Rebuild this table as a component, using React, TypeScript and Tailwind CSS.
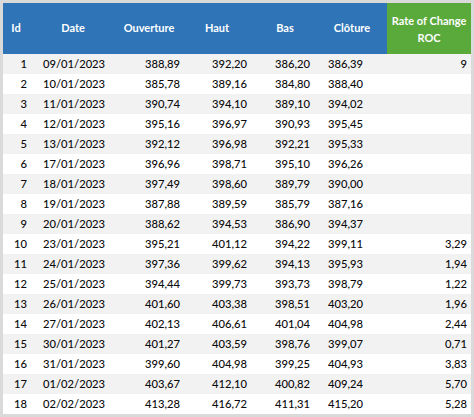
const rows: string[][] = [
  ['1', '09/01/2023', '388,89', '392,20', '386,20', '386,39', '9'],
  ['2', '10/01/2023', '385,78', '389,16', '384,80', '388,40', ''],
  ['3', '11/01/2023', '390,74', '394,10', '389,10', '394,02', ''],
  ['4', '12/01/2023', '395,16', '396,97', '390,93', '395,45', ''],
  ['5', '13/01/2023', '392,12', '396,98', '392,21', '395,33', ''],
  ['6', '17/01/2023', '396,96', '398,71', '395,10', '396,26', ''],
  ['7', '18/01/2023', '397,49', '398,60', '389,79', '390,00', ''],
  ['8', '19/01/2023', '387,88', '389,59', '385,79', '387,16', ''],
  ['9', '20/01/2023', '388,62', '394,53', '386,90', '394,37', ''],
  ['10', '23/01/2023', '395,21', '401,12', '394,22', '399,11', '3,29'],
  ['11', '24/01/2023', '397,36', '399,62', '394,13', '395,93', '1,94'],
  ['12', '25/01/2023', '394,44', '399,73', '393,73', '398,79', '1,22'],
  ['13', '26/01/2023', '401,60', '403,38', '398,51', '403,20', '1,96'],
  ['14', '27/01/2023', '402,13', '406,61', '401,04', '404,98', '2,44'],
  ['15', '30/01/2023', '401,27', '403,59', '398,76', '399,07', '0,71'],
  ['16', '31/01/2023', '399,60', '404,98', '399,25', '404,93', '3,83'],
  ['17', '01/02/2023', '403,67', '412,10', '400,82', '409,24', '5,70'],
  ['18', '02/02/2023', '413,28', '416,72', '411,31', '415,20', '5,28'],
];

export default function App() {
  return (
    <div
      className="w-[474px] h-[417px] bg-[#dadada] p-[3px]"
      style={{ fontFamily: 'Lato, "Open Sans", sans-serif' }}
    >
      <div className="w-[468px] bg-white">
        {/* header */}
        <div className="flex h-[51px] text-white font-bold text-[11px]">
          <div className="flex bg-[#2e74b7] items-center">
            <div className="w-[26px] text-center">Id</div>
            <div className="w-[88px] text-center">Date</div>
            <div className="w-[64px] text-center">Ouverture</div>
            <div className="w-[72px] text-center">Haut</div>
            <div className="w-[64px] text-center">Bas</div>
            <div className="w-[70px] text-center">Clôture</div>
          </div>
          <div className="w-[84px] bg-[#5aa93b] flex flex-col items-center justify-center leading-[17px] whitespace-nowrap">
            <span>Rate of Change</span>
            <span>ROC</span>
          </div>
        </div>
        {/* body */}
        <div className="text-[11.2px] text-[#0a0a0a] font-medium">
          {rows.map((r, i) => (
            <div
              key={r[0]}
              className={`flex h-[20px] items-center ${i % 2 === 0 ? 'bg-[#f2f2f2]' : 'bg-white'}`}
            >
              <div className="w-[27px] text-right pr-[3px]">{r[0]}</div>
              <div className="w-[90px] pl-[13px]">{r[1]}</div>
              <div className="w-[64px] text-right pr-[4px]">{r[2]}</div>
              <div className="w-[67px] text-right pr-[4px]">{r[3]}</div>
              <div className="w-[63px] text-right pr-[4px]">{r[4]}</div>
              <div className="w-[53px] text-right pr-[4px]">{r[5]}</div>
              <div className="w-[104px] text-right pr-[4px]">{r[6]}</div>
            </div>
          ))}
        </div>
      </div>
    </div>
  );
}
